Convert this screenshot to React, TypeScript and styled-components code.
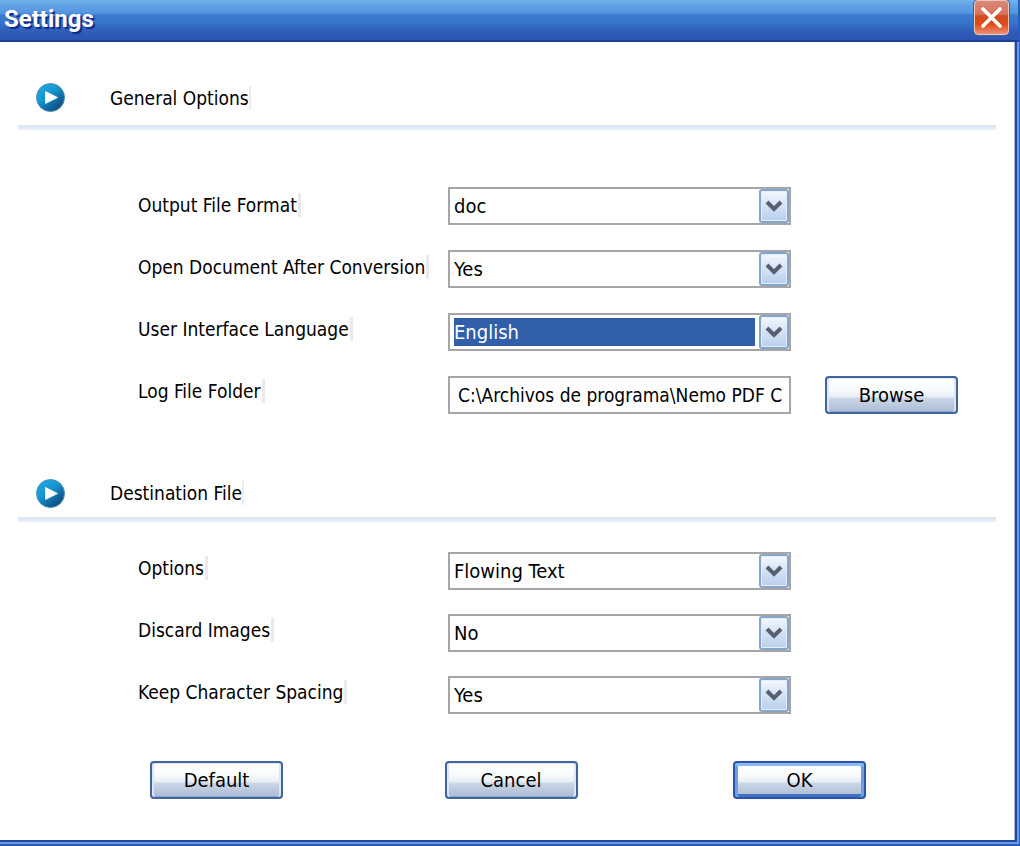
import React, { useId } from "react";
import styled, { createGlobalStyle } from "styled-components";

const GlobalStyle = createGlobalStyle`
  * { box-sizing: border-box; }
  body {
    margin: 0;
    background: #fff;
    color: #000;
    font: 19px/24px "DejaVu Sans Condensed", Tahoma, "Noto Sans", sans-serif;
  }
`;

const Window = styled.div`
  display: flex;
  flex-direction: column;
  min-height: 100vh;
`;

const TitleBar = styled.header`
  display: flex;
  justify-content: space-between;
  align-items: flex-start;
  height: 42px;
  padding: 0 9px 0 4px;
  border-right: 2px solid #2a5cba;
  border-bottom: 2px solid #1f4099;
  background: linear-gradient(#74b2ea 0, #62a2e6 5px, #5595e0 13px, #3a7ccf 15px, #3673c9 23px, #2f5cb8 32px, #2b55b1 100%);
`;

const Title = styled.h1`
  margin: 0;
  padding-top: 4px;
  color: #fff;
  font: bold 24px/30px Roboto, sans-serif;
  text-shadow: 2px 2px 1px #10298c;
`;

const CloseButton = styled.button`
  display: grid;
  place-items: center;
  width: 35px;
  height: 35px;
  padding: 0;
  border: 1px solid #f4c4b4;
  border-radius: 4px;
  background: linear-gradient(#d98877 0, #d8735c 40%, #cf4a26 45%, #e04a17 70%, #eb9478 100%);
  box-shadow: 0 0 0 1px #3a66a8;
`;

const Body = styled.main`
  flex: 1;
  display: flex;
  flex-direction: column;
  padding: 0 19px 0 18px;
  border-style: solid;
  border-color: #23479d;
  border-width: 0 2px 2px 0;
  box-shadow: inset -1px 0 #a9b8de;
  background: #fff;
`;

const Frame = styled.div`
  flex: 1;
  display: flex;
  flex-direction: column;
  padding: 0 2px 2px 0;
  border-style: solid;
  border-color: #2a5cba;
  border-width: 0 1px 2px 0;
  background: #6a9be2;
`;

const SectionHeader = styled.div<{ $first?: boolean }>`
  display: flex;
  align-items: center;
  gap: 44px;
  height: ${(p) => (p.$first ? 83 : 58)}px;
  margin-top: ${(p) => (p.$first ? 0 : 45)}px;
  padding: ${(p) => (p.$first ? "28px" : "10px")} 0 0 17px;
`;

const Rule = styled.hr`
  width: 100%;
  height: 6px;
  margin: 0;
  border: 0;
  background: linear-gradient(#dce6f5, #dfe8f6 50%, #fff);
`;

const Heading = styled.h2`
  margin: 0;
  font: inherit;
  border-right: 2px solid #ebebf2;
`;

const Group = styled.div<{ $space: number }>`
  display: flex;
  align-items: flex-start;
  margin-top: ${(p) => p.$space}px;
  padding-left: 120px;
`;

const Labels = styled.div<{ $top: number }>`
  display: flex;
  flex-direction: column;
  align-items: flex-start;
  gap: 38px;
  flex: 0 0 310px;
  padding-top: ${(p) => p.$top}px;
`;

const Label = styled.label`
  padding-right: 1px;
  border-right: 3px solid #e9e9ee;
  white-space: nowrap;
`;

const Fields = styled.div<{ $gap: number }>`
  display: flex;
  flex-direction: column;
  gap: ${(p) => p.$gap}px;
  flex: 0 1 343px;
  min-width: 0;
`;

const SelectBox = styled.div`
  position: relative;
  display: flex;
`;

const Select = styled.select<{ $active?: boolean }>`
  appearance: none;
  width: 100%;
  height: 38px;
  padding: 3px 34px 3px 4px;
  border: 2px solid #a5a5aa;
  border-radius: 0;
  outline: 0;
  font: inherit;
  font-size: 20px;
  color: ${(p) => (p.$active ? "#fff" : "#000")};
  background: ${(p) => (p.$active ? "#315fa9" : "#fff")} content-box;
`;

const Arrow = styled.span`
  position: absolute;
  top: 2px;
  right: 2px;
  display: grid;
  place-items: center;
  width: 30px;
  height: 34px;
  border: 2px solid #86a5c9;
  border-radius: 3px;
  background: linear-gradient(#f4f8fe, #d6e4f7 45%, #b9cfec);
  box-shadow: inset 0 0 0 1px #e4eefb;
  pointer-events: none;
`;

const TextInput = styled.input`
  width: 100%;
  height: 38px;
  padding: 0 3px 0 8px;
  border: 2px solid #a5a5aa;
  outline: 0;
  font: inherit;
`;

const Button = styled.button<{ $primary?: boolean }>`
  width: 133px;
  height: 38px;
  padding: 0;
  border: 2px solid ${(p) => (p.$primary ? "#2855b0" : "#40659c")};
  border-radius: 4px;
  font: inherit;
  font-size: 20px;
  color: #000;
  background: linear-gradient(#fff 0, #f8fbfc 35%, #e8eef5 55%, #cbd6e6 60%, #aabbd5 100%);
  box-shadow: ${(p) =>
    p.$primary
      ? "inset 0 3px #8db8ee, inset 3px 0 #6d9fe2, inset -3px 0 #6d9fe2, inset 0 -3px #4470bd"
      : "inset 2px 0 #dce6f5, inset -2px 0 #dce6f5, inset 0 1px #dce8f6, inset 0 -1px #8ea6cb"};
`;

const BrowseSlot = styled.div`
  align-self: flex-end;
  margin-left: 34px;
`;

const Footer = styled.footer`
  display: grid;
  grid-template-columns: 294fr 288fr 133px;
  margin: 47px 0 40px;
  padding: 0 130px 0 132px;
`;

function PlayIcon() {
  const id = useId();
  return (
    <svg width="31" height="31" viewBox="0 0 31 31" aria-hidden="true">
      <defs>
        <linearGradient id={id} x1="0.15" y1="0.1" x2="0.8" y2="0.95">
          <stop offset="0" stopColor="#20a5df" />
          <stop offset="0.4" stopColor="#1595d0" />
          <stop offset="0.75" stopColor="#10649c" />
          <stop offset="1" stopColor="#0c4c7d" />
        </linearGradient>
      </defs>
      <circle cx="15.5" cy="15.5" r="14" fill={`url(#${id})`} stroke="#4c8fb5" />
      <path d="M10.5 9.5v12l12-6z" fill="#fff" stroke="#dcebf4" strokeLinejoin="round" />
    </svg>
  );
}

function DropDown({ id, options, active }: { id: string; options: string[]; active?: boolean }) {
  return (
    <SelectBox>
      <Select id={id} $active={active}>
        {options.map((o) => (
          <option key={o}>{o}</option>
        ))}
      </Select>
      <Arrow>
        <svg width="18" height="12" viewBox="0 0 18 12" aria-hidden="true">
          <path d="M2 2l7 7 7-7" fill="none" stroke="#56606f" strokeWidth="4" />
        </svg>
      </Arrow>
    </SelectBox>
  );
}

export default function App() {
  return (
    <>
      <GlobalStyle />
      <Window>
        <TitleBar>
          <Title>Settings</Title>
          <CloseButton aria-label="Close">
            <svg width="21" height="21" viewBox="0 0 21 21" aria-hidden="true">
              <path d="M2 2l17 17M19 2L2 19" stroke="#fff" strokeWidth="3.6" strokeLinecap="round" />
            </svg>
          </CloseButton>
        </TitleBar>
        <Frame>
          <Body>
            <SectionHeader $first>
              <PlayIcon />
              <Heading>General Options</Heading>
            </SectionHeader>
            <Rule />
            <Group $space={56}>
              <Labels $top={6}>
                <Label htmlFor="format">Output File Format</Label>
                <Label htmlFor="open">Open Document After Conversion</Label>
                <Label htmlFor="language">User Interface Language</Label>
                <Label htmlFor="folder">Log File Folder</Label>
              </Labels>
              <Fields $gap={25}>
                <DropDown id="format" options={["doc"]} />
                <DropDown id="open" options={["Yes", "No"]} />
                <DropDown id="language" options={["English"]} active />
                <TextInput id="folder" defaultValue="C:\Archivos de programa\Nemo PDF C" />
              </Fields>
              <BrowseSlot>
                <Button>Browse</Button>
              </BrowseSlot>
            </Group>
            <SectionHeader>
              <PlayIcon />
              <Heading>Destination File</Heading>
            </SectionHeader>
            <Rule />
            <Group $space={29}>
              <Labels $top={4}>
                <Label htmlFor="options">Options</Label>
                <Label htmlFor="images">Discard Images</Label>
                <Label htmlFor="spacing">Keep Character Spacing</Label>
              </Labels>
              <Fields $gap={24}>
                <DropDown id="options" options={["Flowing Text"]} />
                <DropDown id="images" options={["No", "Yes"]} />
                <DropDown id="spacing" options={["Yes", "No"]} />
              </Fields>
            </Group>
            <Footer>
              <Button>Default</Button>
              <Button>Cancel</Button>
              <Button $primary>OK</Button>
            </Footer>
          </Body>
        </Frame>
      </Window>
    </>
  );
}
